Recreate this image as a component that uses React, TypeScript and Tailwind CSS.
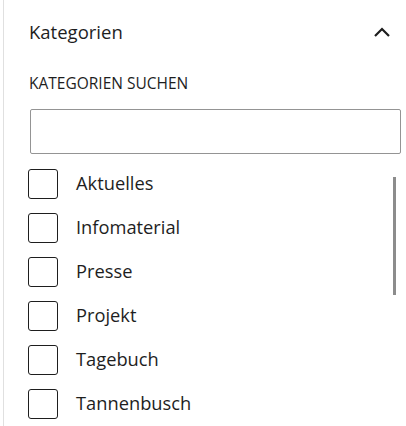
const categories = ['Aktuelles', 'Infomaterial', 'Presse', 'Projekt', 'Tagebuch', 'Tannenbusch']

export default function App() {
  return (
    <div className="flex h-[426px] w-[406px] overflow-hidden bg-white font-['Open_Sans',sans-serif] text-[#1e1e1e]">
      <div className="w-[3px] shrink-0" />
      <div className="w-px shrink-0 bg-[#e0e0e0]" />
      <div className="flex flex-1 flex-col pl-[25px] pr-[5px]">
        <div className="flex h-[62px] items-center justify-between pt-[2px]">
          <h2 className="text-[18.5px] leading-none">Kategorien</h2>
          <svg width="18" height="12" viewBox="0 0 18 12" className="mr-[10px]" fill="none">
            <path d="M2 10 L9 3 L16 10" stroke="#1e1e1e" strokeWidth="2.2" />
          </svg>
        </div>
        <label className="mt-[14px] text-[15.5px] uppercase leading-none">Kategorien suchen</label>
        <input
          type="text"
          className="mt-[17px] ml-px h-[45px] rounded-[2px] border border-[#949494] px-3 outline-none"
        />
        <div className="relative mt-[15px] flex flex-col gap-[14px]">
          {categories.map((c) => (
            <div key={c} className="flex items-center">
              <span className="-ml-px h-[30px] w-[30px] shrink-0 rounded-[3px] border border-[#1e1e1e]" />
              <span className="ml-[18px] text-[18.3px] leading-none">{c}</span>
            </div>
          ))}
          <div className="absolute right-[5px] top-[8px] h-[118px] w-[3px] bg-[#8c8c8c]" />
        </div>
      </div>
    </div>
  )
}
